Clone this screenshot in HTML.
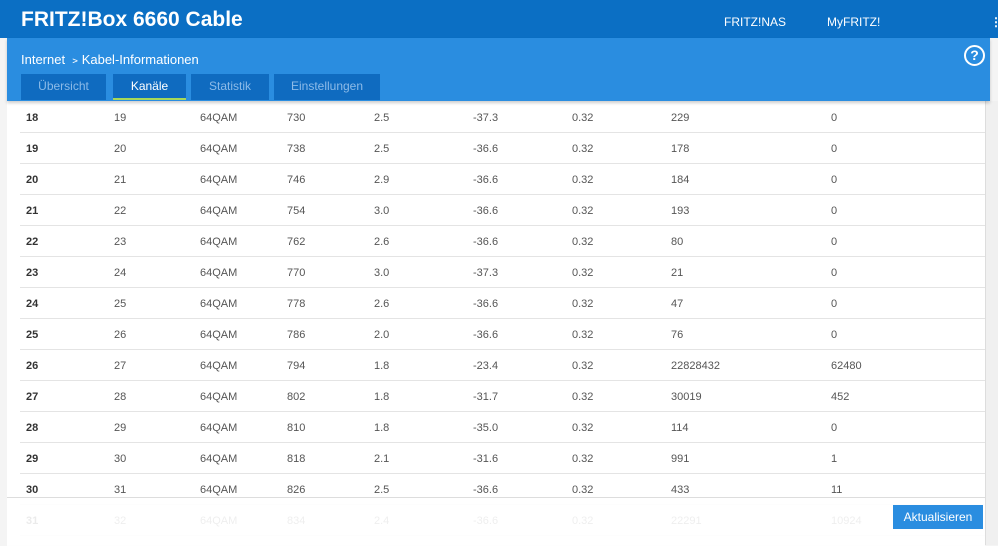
<!DOCTYPE html>
<html><head><meta charset="utf-8"><style>
body{margin:0;width:998px;height:545px;overflow:hidden;background:#f4f4f4;font-family:"Liberation Sans",sans-serif;position:relative}
.top{position:absolute;left:0;top:0;width:998px;height:38px;background:#0b6fc4}
.title{position:absolute;left:21px;top:8px;color:#fff;font-weight:bold;font-size:21px}
.nav{position:absolute;top:15px;color:#fff;font-size:12px}
.hdr{position:absolute;left:7px;top:38px;width:983px;height:63px;background:#2a8de0;box-shadow:0 2px 3px rgba(0,0,0,.2)}
.crumb{position:absolute;left:14px;top:11px;color:#fff;font-size:13px}
.help{position:absolute;left:957px;top:7px;width:17px;height:17px;border:2px solid #fff;border-radius:50%;color:#fff;font-weight:bold;font-size:14px;text-align:center;line-height:17px}
.tab{position:absolute;top:36px;height:26px;background:#0f6bc0;color:#8dbbe8;font-size:12px;text-align:center;line-height:25px}
.tab.on{color:#fff;border-bottom:2px solid #a6d85a;height:24px}
.content{position:absolute;left:7px;top:101px;width:978px;height:444px;background:#fff}
.row{position:absolute;left:13px;width:965px;height:30px;border-bottom:1px solid #e4e4e4;font-size:11px;color:#555}
.row span{position:absolute;top:10px}
.row span:first-child{font-weight:bold;color:#333}
.foot{position:absolute;left:7px;top:497px;width:978px;height:48px;background:rgba(255,255,255,.9);border-top:1px solid #ddd}
.btn{position:absolute;left:886px;top:7px;width:90px;height:24px;background:#2a8de0;color:#fff;font-size:12px;text-align:center;line-height:24px}
.sb{position:absolute;left:985px;top:101px;width:13px;height:444px;background:#f0f0f0;border-left:1px solid #ddd}
</style></head><body>
<div class="top"><div class="title">FRITZ!Box 6660 Cable</div>
<div class="nav" style="left:724px">FRITZ!NAS</div><div class="nav" style="left:827px">MyFRITZ!</div>
<div class="nav" style="left:990px;font-weight:bold">⋮</div></div>
<div class="content">
<div class="row" style="top:1px"><span style="left:6px">18</span><span style="left:94px">19</span><span style="left:180px">64QAM</span><span style="left:267px">730</span><span style="left:354px">2.5</span><span style="left:453px">-37.3</span><span style="left:552px">0.32</span><span style="left:651px">229</span><span style="left:811px">0</span></div>
<div class="row" style="top:32px"><span style="left:6px">19</span><span style="left:94px">20</span><span style="left:180px">64QAM</span><span style="left:267px">738</span><span style="left:354px">2.5</span><span style="left:453px">-36.6</span><span style="left:552px">0.32</span><span style="left:651px">178</span><span style="left:811px">0</span></div>
<div class="row" style="top:63px"><span style="left:6px">20</span><span style="left:94px">21</span><span style="left:180px">64QAM</span><span style="left:267px">746</span><span style="left:354px">2.9</span><span style="left:453px">-36.6</span><span style="left:552px">0.32</span><span style="left:651px">184</span><span style="left:811px">0</span></div>
<div class="row" style="top:94px"><span style="left:6px">21</span><span style="left:94px">22</span><span style="left:180px">64QAM</span><span style="left:267px">754</span><span style="left:354px">3.0</span><span style="left:453px">-36.6</span><span style="left:552px">0.32</span><span style="left:651px">193</span><span style="left:811px">0</span></div>
<div class="row" style="top:125px"><span style="left:6px">22</span><span style="left:94px">23</span><span style="left:180px">64QAM</span><span style="left:267px">762</span><span style="left:354px">2.6</span><span style="left:453px">-36.6</span><span style="left:552px">0.32</span><span style="left:651px">80</span><span style="left:811px">0</span></div>
<div class="row" style="top:156px"><span style="left:6px">23</span><span style="left:94px">24</span><span style="left:180px">64QAM</span><span style="left:267px">770</span><span style="left:354px">3.0</span><span style="left:453px">-37.3</span><span style="left:552px">0.32</span><span style="left:651px">21</span><span style="left:811px">0</span></div>
<div class="row" style="top:187px"><span style="left:6px">24</span><span style="left:94px">25</span><span style="left:180px">64QAM</span><span style="left:267px">778</span><span style="left:354px">2.6</span><span style="left:453px">-36.6</span><span style="left:552px">0.32</span><span style="left:651px">47</span><span style="left:811px">0</span></div>
<div class="row" style="top:218px"><span style="left:6px">25</span><span style="left:94px">26</span><span style="left:180px">64QAM</span><span style="left:267px">786</span><span style="left:354px">2.0</span><span style="left:453px">-36.6</span><span style="left:552px">0.32</span><span style="left:651px">76</span><span style="left:811px">0</span></div>
<div class="row" style="top:249px"><span style="left:6px">26</span><span style="left:94px">27</span><span style="left:180px">64QAM</span><span style="left:267px">794</span><span style="left:354px">1.8</span><span style="left:453px">-23.4</span><span style="left:552px">0.32</span><span style="left:651px">22828432</span><span style="left:811px">62480</span></div>
<div class="row" style="top:280px"><span style="left:6px">27</span><span style="left:94px">28</span><span style="left:180px">64QAM</span><span style="left:267px">802</span><span style="left:354px">1.8</span><span style="left:453px">-31.7</span><span style="left:552px">0.32</span><span style="left:651px">30019</span><span style="left:811px">452</span></div>
<div class="row" style="top:311px"><span style="left:6px">28</span><span style="left:94px">29</span><span style="left:180px">64QAM</span><span style="left:267px">810</span><span style="left:354px">1.8</span><span style="left:453px">-35.0</span><span style="left:552px">0.32</span><span style="left:651px">114</span><span style="left:811px">0</span></div>
<div class="row" style="top:342px"><span style="left:6px">29</span><span style="left:94px">30</span><span style="left:180px">64QAM</span><span style="left:267px">818</span><span style="left:354px">2.1</span><span style="left:453px">-31.6</span><span style="left:552px">0.32</span><span style="left:651px">991</span><span style="left:811px">1</span></div>
<div class="row" style="top:373px"><span style="left:6px">30</span><span style="left:94px">31</span><span style="left:180px">64QAM</span><span style="left:267px">826</span><span style="left:354px">2.5</span><span style="left:453px">-36.6</span><span style="left:552px">0.32</span><span style="left:651px">433</span><span style="left:811px">11</span></div>
<div class="row" style="top:404px"><span style="left:6px">31</span><span style="left:94px">32</span><span style="left:180px">64QAM</span><span style="left:267px">834</span><span style="left:354px">2.4</span><span style="left:453px">-36.6</span><span style="left:552px">0.32</span><span style="left:651px">22291</span><span style="left:811px">10924</span></div>
</div>
<div class="sb"></div>
<div class="foot"><div class="btn">Aktualisieren</div></div>
<div class="hdr"><div class="crumb">Internet ﹥Kabel-Informationen</div><div class="help">?</div>
<div class="tab" style="left:14px;width:85px">Übersicht</div>
<div class="tab on" style="left:106px;width:73px">Kanäle</div>
<div class="tab" style="left:184px;width:78px">Statistik</div>
<div class="tab" style="left:267px;width:106px">Einstellungen</div>
</div>
</body></html>
